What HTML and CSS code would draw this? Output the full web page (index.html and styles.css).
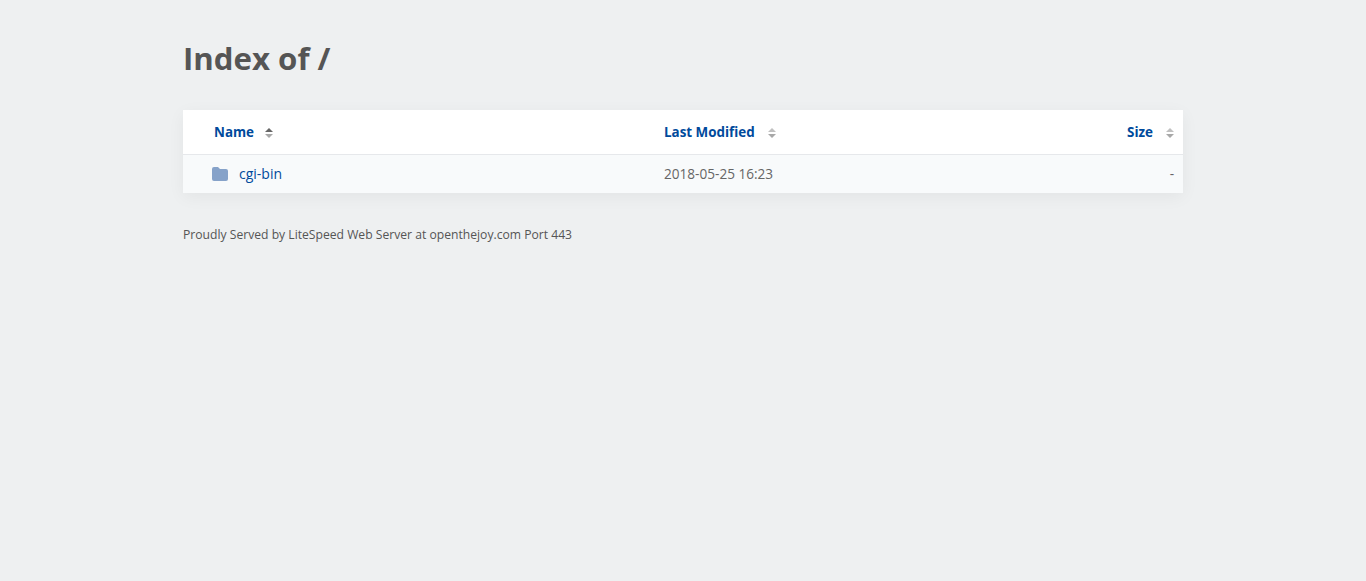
FILE: index.html
```html
<!DOCTYPE html>
<html lang="en">
<head>
<meta charset="utf-8">
<title>Index of /</title>
<link rel="stylesheet" href="styles.css">
</head>
<body>
<main class="page">
  <h1 class="title">Index of /</h1>
  <table class="listing">
    <thead>
      <tr>
        <th class="col-name"><a href="#" class="sort">Name</a><svg class="arrows" viewBox="0 0 8 10"><path class="up dark" d="M4 0 8 4H0z"/><path class="down" d="M4 10 0 6h8z"/></svg></th>
        <th class="col-date"><a href="#" class="sort">Last Modified</a><svg class="arrows" viewBox="0 0 8 10"><path class="up" d="M4 0 8 4H0z"/><path class="down" d="M4 10 0 6h8z"/></svg></th>
        <th class="col-size"><a href="#" class="sort">Size</a><svg class="arrows" viewBox="0 0 8 10"><path class="up" d="M4 0 8 4H0z"/><path class="down" d="M4 10 0 6h8z"/></svg></th>
      </tr>
    </thead>
    <tbody>
      <tr>
        <td class="col-name"><a href="#" class="entry"><svg class="folder" viewBox="0 0 16 14"><path d="M2 0h4l2 2h6a2 2 0 0 1 2 2v8a2 2 0 0 1-2 2H2a2 2 0 0 1-2-2V2a2 2 0 0 1 2-2z"/></svg>cgi-bin</a></td>
        <td class="col-date">2018-05-25 16:23</td>
        <td class="col-size">-</td>
      </tr>
    </tbody>
  </table>
  <p class="footer">Proudly Served by LiteSpeed Web Server at openthejoy.com Port 443</p>
</main>
</body>
</html>
```
FILE: styles.css
```css
html, body { margin: 0; padding: 0; }
body {
  background: #eef0f1;
  color: #555;
  font-family: "Open Sans", sans-serif;
  font-size: 13px;
}
.page { width: 1000px; margin: 0 auto; padding-top: 38px; }
.title { margin: 0 0 32px; font-size: 31.2px; line-height: 40px; font-weight: 700; color: #555; }
.listing {
  width: 100%;
  table-layout: fixed;
  border-collapse: collapse;
  background: #fff;
  box-shadow: 0 4px 16px rgba(0, 0, 0, .05);
}
th { box-sizing: border-box; height: 44px; padding: 0; font-size: 13.4px; font-weight: 700; text-align: left; border-bottom: 1px solid #e6e8eb; }
td { box-sizing: border-box; height: 39px; padding: 0; background: #f8fafb; color: #666; font-size: 13.6px; }
a { color: #004a9c; text-decoration: none; }
.col-name { width: 481px; padding-left: 31px; }
td.col-name { padding-left: 29px; }
.col-date { width: 400px; }
.col-size { text-align: right; padding-right: 9px; }
.arrows { width: 8px; height: 10px; margin-left: 13px; vertical-align: -1px; }
th.col-name .arrows { margin-left: 11px; }
.arrows path { fill: #c0c0c0; }
.arrows .dark { fill: #666; }
.arrows .down { fill: #a8a8a8; }
.folder { width: 16px; height: 14px; margin-right: 11px; vertical-align: -2px; fill: #86a2c9; }
.entry { font-size: 14px; }
.footer { margin: 33px 0 0; font-size: 12.15px; line-height: 18px; color: #555; }
```
